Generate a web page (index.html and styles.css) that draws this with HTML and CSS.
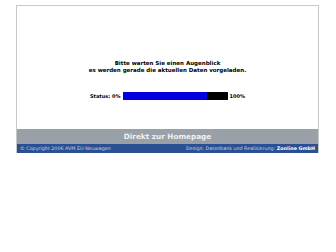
FILE: index.html
```html
<!DOCTYPE html>
<html>
<head>
<meta charset="utf-8">
<link rel="stylesheet" href="styles.css">
</head>
<body>
<div class="frame">
  <div class="content">
    <p class="msg">Bitte warten Sie einen Augenblick<br>es werden gerade die aktuellen Daten vorgeladen.</p>
    <div class="status">
      <span class="lbl">Status: 0%</span>
      <div class="bar"><div class="fill" style="width:80%"></div></div>
      <span class="lbl">100%</span>
    </div>
  </div>
  <div class="home">Direkt zur Homepage</div>
  <div class="foot">
    <span>© Copyright 2006 AVM EU-Neuwagen</span>
    <span>Design, Datenbank und Realisierung: <b>Zonline GmbH</b></span>
  </div>
</div>
</body>
</html>
```
FILE: styles.css
```css
html, body { margin: 0; padding: 0; background: #fff; }
body { font-family: "DejaVu Sans", Verdana, sans-serif; }
.frame {
  margin: 5px 0 0 16px;
  width: 303px;
  box-sizing: border-box;
  border: 1px solid #c8c8c8;
  border-bottom: none;
  display: flex;
  flex-direction: column;
}
.content {
  height: 123px;
  display: flex;
  flex-direction: column;
  align-items: center;
  padding-top: 54px;
  box-sizing: border-box;
}
.msg {
  margin: 0;
  font-size: 5.5px;
  line-height: 7px;
  font-weight: bold;
  text-align: center;
  color: #000;
}
.status {
  margin-top: 18px;
  display: flex;
  align-items: center;
  gap: 2px;
  font-size: 5px;
  font-weight: bold;
  color: #000;
}
.bar {
  width: 105px;
  height: 8px;
  background: #000;
}
.fill { height: 100%; background: #0000e0; }
.home {
  height: 15px;
  background: #9aa0a8;
  color: #f0f0f0;
  font-weight: bold;
  font-size: 7.3px;
  display: flex;
  align-items: center;
  justify-content: center;
}
.foot {
  height: 9px;
  background: #2b4f93;
  color: #c8d4ea;
  font-size: 4.8px;
  display: flex;
  align-items: center;
  justify-content: space-between;
  padding: 0 3px;
}
.foot b { color: #fff; }
```
